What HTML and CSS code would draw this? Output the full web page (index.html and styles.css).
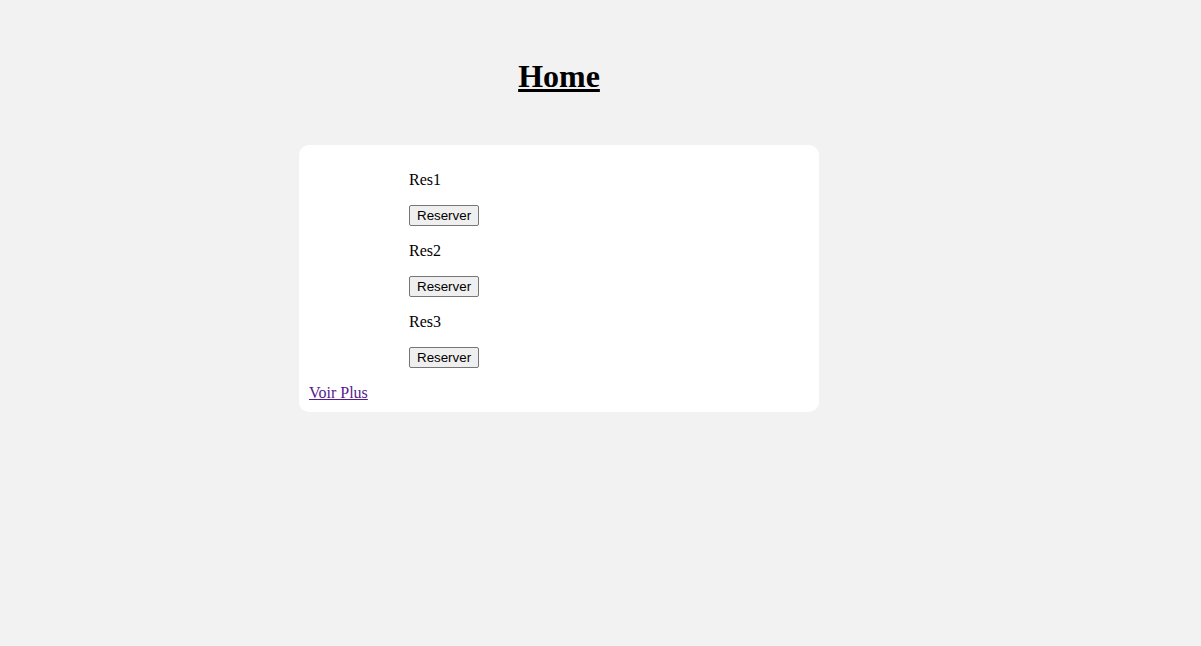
FILE: index.html
```html
<!DOCTYPE html>
<html lang="fr">
<head>
<meta charset="utf-8">
<title>Home</title>
<link rel="stylesheet" href="styles.css">
</head>
<body>
<div class="page">
  <h1 class="title">Home</h1>
  <div class="card">
    <div class="list">
      <p class="name">Res1</p>
      <div class="action"><button class="btn">Reserver</button></div>
      <p class="name">Res2</p>
      <div class="action"><button class="btn">Reserver</button></div>
      <p class="name">Res3</p>
      <div class="action"><button class="btn">Reserver</button></div>
    </div>
    <a class="more" href="#">Voir Plus</a>
  </div>
</div>
</body>
</html>
```
FILE: styles.css
```css
html, body {
  background: #f2f2f2;
}
body {
  margin: 8px;
  font-family: "Liberation Serif", "Times New Roman", serif;
  font-size: 16px;
  color: #000;
}
.page {
  width: 520px;
  margin-left: 291px;
}
.title {
  font-size: 32px;
  font-weight: bold;
  text-align: center;
  text-decoration: underline;
  margin: 50px 0 50px;
}
.card {
  background: #fff;
  border-radius: 10px;
  padding: 10px;
}
.list {
  margin-left: 100px;
}
.name {
  margin: 16px 0;
  line-height: 18px;
}
.action {
  margin: 16px 0;
  height: 21px;
  display: flex;
  align-items: flex-start;
}
.btn {
  font-family: "Liberation Sans", Arial, sans-serif;
  font-size: 13.333px;
  line-height: 15px;
  height: 21px;
  color: #000;
  background: #efefef;
  border: 1px solid #767676;
  border-radius: 2px;
  padding: 1px 7px;
  margin: 0;
}
.more {
  color: #551a8b;
  text-decoration: underline;
  line-height: 18px;
}
```
